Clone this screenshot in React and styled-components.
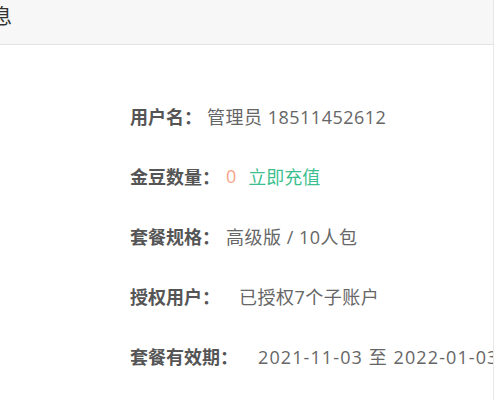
import React from 'react';
import styled, { createGlobalStyle } from 'styled-components';

const Global = createGlobalStyle`
  body {
    margin: 0;
    background: #fff;
    font-family: "Open Sans", "Noto Sans CJK SC", sans-serif;
    overflow: hidden;
  }
`

const Panel = styled.div`
  width: 493px;
  height: 400px;
  border-right: 1px solid #e8e8e8;
  overflow: hidden;
`

const Header = styled.div`
  height: 44px;
  background: #f7f7f7;
  border-bottom: 1px solid #e3e3e3;
  overflow: hidden;
`

const Title = styled.h2`
  margin: 0 0 0 -68px;
  padding-top: 4px;
  font-size: 20px;
  line-height: 26px;
  font-weight: normal;
  color: #333;
  white-space: nowrap;
`

const List = styled.div`
  padding: 41px 0 0 130px;
`

const Row = styled.div`
  display: flex;
  align-items: center;
  height: 60px;
  font-size: 18px;
  white-space: nowrap;
`

const Label = styled.span`
  font-weight: bold;
  color: #555;
`

const Value = styled.span`
  color: #666;
  letter-spacing: ${p => p.spacing || 0.5}px;
  margin-left: ${p => p.gap}px;
`

const Count = styled.span`
  color: #f9a48a;
  margin-left: ${p => p.gap}px;
`

const Recharge = styled.a`
  color: #3dbf8f;
  margin-left: 12px;
  text-decoration: none;
  cursor: pointer;
`

export default function App() {
  return (
    <Panel>
      <Global />
      <Header>
        <Title>账户信息</Title>
      </Header>
      <List>
        <Row>
          <Label>用户名：</Label>
          <Value gap={5}>管理员 18511452612</Value>
        </Row>
        <Row>
          <Label>金豆数量：</Label>
          <Count gap={6}>0</Count>
          <Recharge>立即充值</Recharge>
        </Row>
        <Row>
          <Label>套餐规格：</Label>
          <Value gap={6}>高级版 / 10人包</Value>
        </Row>
        <Row>
          <Label>授权用户：</Label>
          <Value gap={19}>已授权7个子账户</Value>
        </Row>
        <Row>
          <Label>套餐有效期：</Label>
          <Value gap={20} spacing={1.1}>2021-11-03 至 2022-01-03</Value>
        </Row>
      </List>
    </Panel>
  );
}
